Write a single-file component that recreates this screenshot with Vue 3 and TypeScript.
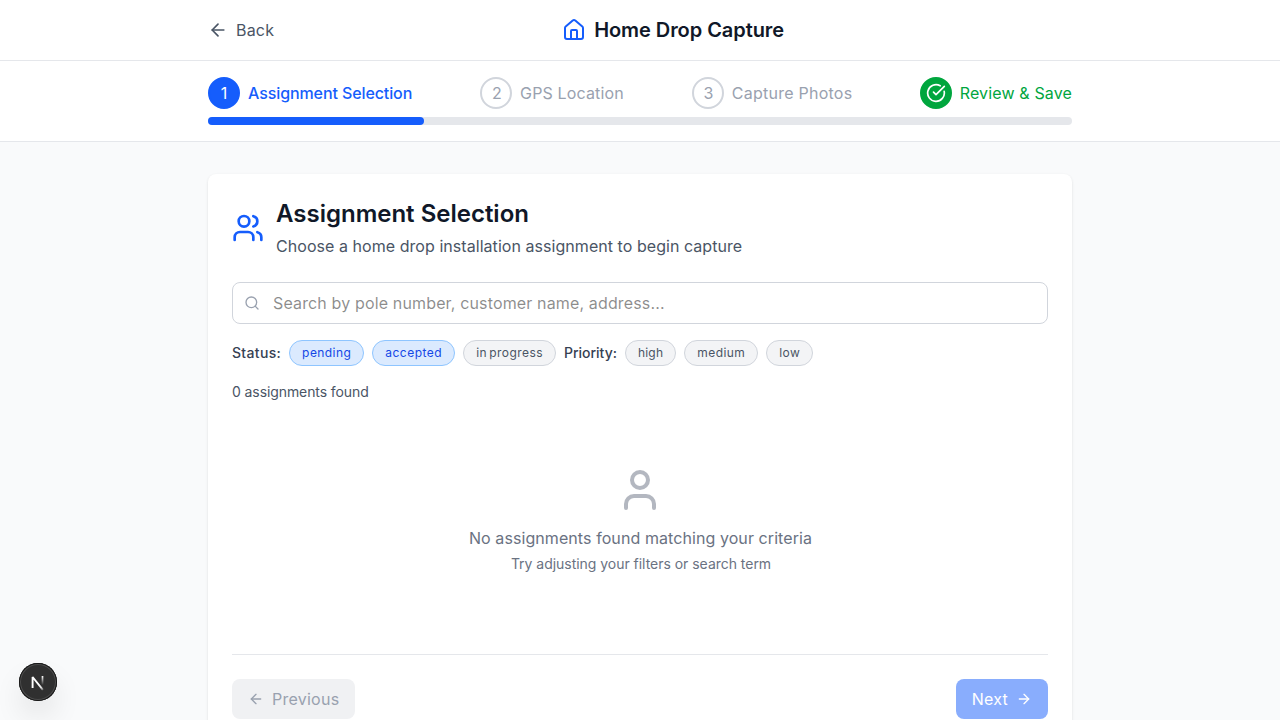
<script setup lang="ts">
import { computed, ref } from 'vue'

type StepState = 'active' | 'upcoming' | 'done'

interface Step {
  id: number
  label: string
  state: StepState
}

interface Chip {
  label: string
  selected: boolean
}

const steps: Step[] = [
  { id: 1, label: 'Assignment Selection', state: 'active' },
  { id: 2, label: 'GPS Location', state: 'upcoming' },
  { id: 3, label: 'Capture Photos', state: 'upcoming' },
  { id: 4, label: 'Review & Save', state: 'done' },
]

const progress = computed(() => (1 / steps.length) * 100)

const search = ref('')
const statuses = ref<Chip[]>([
  { label: 'pending', selected: true },
  { label: 'accepted', selected: true },
  { label: 'in progress', selected: false },
])
const priorities = ref<Chip[]>([
  { label: 'high', selected: false },
  { label: 'medium', selected: false },
  { label: 'low', selected: false },
])

const slug = (label: string) => 'chip-' + label.replace(' ', '-')
</script>

<template>
  <div class="page">
    <header class="header">
      <div class="container header-row">
        <button class="back" type="button">
          <svg class="icon i20" viewBox="0 0 24 24"><path d="m12 19-7-7 7-7" /><path d="M19 12H5" /></svg>
          <span>Back</span>
        </button>
        <div class="brand">
          <svg class="icon i24" viewBox="0 0 24 24">
            <path d="M15 21v-8a1 1 0 0 0-1-1h-4a1 1 0 0 0-1 1v8" />
            <path d="M3 10a2 2 0 0 1 .709-1.528l7-5.999a2 2 0 0 1 2.582 0l7 5.999A2 2 0 0 1 21 10v9a2 2 0 0 1-2 2H5a2 2 0 0 1-2-2z" />
          </svg>
          <h1>Home Drop Capture</h1>
        </div>
        <div></div>
      </div>
    </header>

    <nav class="progress">
      <div class="container">
        <div class="steps">
          <div v-for="step in steps" :key="step.id" class="step" :class="[step.state, 'step-' + step.id]">
            <div class="circle">
              <svg v-if="step.state === 'done'" class="icon i20" viewBox="0 0 24 24">
                <path d="M21.801 10A10 10 0 1 1 17 3.335" /><path d="m9 11 3 3L22 4" />
              </svg>
              <span v-else class="number">{{ step.id }}</span>
            </div>
            <span class="step-label">{{ step.label }}</span>
          </div>
        </div>
        <div class="track"><div class="fill" :style="{ width: progress + '%' }"></div></div>
      </div>
    </nav>

    <main class="container main">
      <section class="card">
        <div class="card-head">
          <svg class="icon i32" viewBox="0 0 24 24">
            <path d="M16 21v-2a4 4 0 0 0-4-4H6a4 4 0 0 0-4 4v2" />
            <circle cx="9" cy="7" r="4" />
            <path d="M22 21v-2a4 4 0 0 0-3-3.87" />
            <path d="M16 3.13a4 4 0 0 1 0 7.75" />
          </svg>
          <div>
            <h2>Assignment Selection</h2>
            <p>Choose a home drop installation assignment to begin capture</p>
          </div>
        </div>

        <label class="search">
          <svg class="icon i16" viewBox="0 0 24 24"><circle cx="11" cy="11" r="8" /><path d="m21 21-4.3-4.3" /></svg>
          <input v-model="search" type="text" placeholder="Search by pole number, customer name, address..." />
        </label>

        <div class="filters">
          <span class="filter-label status-label">Status:</span>
          <button
            v-for="chip in statuses"
            :key="chip.label"
            type="button"
            class="chip"
            :class="[slug(chip.label), { selected: chip.selected }]"
            @click="chip.selected = !chip.selected"
          >{{ chip.label }}</button>
          <span class="filter-label priority-label">Priority:</span>
          <button
            v-for="chip in priorities"
            :key="chip.label"
            type="button"
            class="chip"
            :class="[slug(chip.label), { selected: chip.selected }]"
            @click="chip.selected = !chip.selected"
          >{{ chip.label }}</button>
        </div>

        <p class="count">0 assignments found</p>

        <div class="empty">
          <svg class="icon i48" viewBox="0 0 24 24">
            <path d="M19 21v-2a4 4 0 0 0-4-4H9a4 4 0 0 0-4 4v2" /><circle cx="12" cy="7" r="4" />
          </svg>
          <p class="message">No assignments found matching your criteria</p>
          <p class="hint">Try adjusting your filters or search term</p>
        </div>

        <div class="actions">
          <button class="btn previous" type="button" disabled>
            <svg class="icon i16" viewBox="0 0 24 24"><path d="m12 19-7-7 7-7" /><path d="M19 12H5" /></svg>
            <span>Previous</span>
          </button>
          <button class="btn next" type="button" disabled>
            <span>Next</span>
            <svg class="icon i16" viewBox="0 0 24 24"><path d="M5 12h14" /><path d="m12 5 7 7-7 7" /></svg>
          </button>
        </div>
      </section>
    </main>

    <div class="dev-badge">
      <svg width="38" height="38" viewBox="0 0 38 38" fill="none">
        <defs>
          <linearGradient id="diag" x1="20" y1="21" x2="25" y2="27.5" gradientUnits="userSpaceOnUse">
            <stop stop-color="#fff" /><stop offset="0.5" stop-color="#fff" stop-opacity="0.85" /><stop offset="1" stop-color="#fff" stop-opacity="0.1" />
          </linearGradient>
          <linearGradient id="stem" x1="23" y1="13" x2="23" y2="22" gradientUnits="userSpaceOnUse">
            <stop stop-color="#fff" /><stop offset="1" stop-color="#fff" stop-opacity="0" />
          </linearGradient>
        </defs>
        <path d="M13.6 25V14L23.9 26.8" stroke="url(#diag)" stroke-width="1.9" stroke-linejoin="bevel" />
        <path d="M23.5 13v9" stroke="url(#stem)" stroke-width="1.7" />
      </svg>
    </div>
  </div>
</template>

<style>
body {
  margin: 0;
  background: #f9fafb;
}
</style>

<style scoped>
.page {
  height: 100vh;
  overflow: hidden;
  background: #f9fafb;
  color: #171717;
  font-family: Inter, "Liberation Sans", sans-serif;
  font-size: 16px;
  line-height: 24px;
}
.page *, .page { box-sizing: border-box; }
h1, h2, p { margin: 0; }
button, input { font: inherit; color: inherit; letter-spacing: inherit; }
button { padding: 0; border: 0; background: none; }
.container {
  width: 100%;
  max-width: 896px;
  margin: 0 auto;
  padding: 0 16px;
}
.icon {
  display: block;
  flex: none;
  fill: none;
  stroke: currentColor;
  stroke-width: 2;
  stroke-linecap: round;
  stroke-linejoin: round;
}
.i16 { width: 16px; height: 16px; }
.i20 { width: 20px; height: 20px; }
.i24 { width: 24px; height: 24px; }
.i32 { width: 32px; height: 32px; }
.i48 { width: 48px; height: 48px; }

.header {
  padding: 16px 0;
  background: #fff;
  border-bottom: 1px solid #e5e7eb;
}
.header-row {
  display: flex;
  align-items: center;
  justify-content: space-between;
}
.back {
  display: flex;
  align-items: center;
  gap: 8px;
  color: #4a5565;
  letter-spacing: 0.2px;
}
.brand {
  display: flex;
  align-items: center;
  gap: 8px;
}
.brand .icon { color: #155dfc; }
h1 {
  font-size: 20px;
  line-height: 28px;
  font-weight: 600;
  color: #101828;
  letter-spacing: -0.06px;
}

.progress {
  padding: 16px 0;
  background: #fff;
  border-bottom: 1px solid #e5e7eb;
}
.steps {
  display: flex;
  align-items: center;
  justify-content: space-between;
  margin-bottom: 8px;
}
.step {
  display: flex;
  align-items: center;
  gap: 8px;
  color: #99a1af;
}
.circle {
  display: flex;
  align-items: center;
  justify-content: center;
  width: 32px;
  height: 32px;
  border: 2px solid #d1d5dc;
  border-radius: 50%;
}
.upcoming .number { padding-left: 1.5px; }
.active { color: #155dfc; }
.active .step-label { font-weight: 500; }
.active .circle { background: #155dfc; border-color: #155dfc; color: #fff; }
.done { color: #00a63e; }
.done .circle { background: #00a63e; border-color: #00a63e; color: #fff; }
.step-1 .step-label { letter-spacing: -0.1px; }
.step-2 .step-label { letter-spacing: 0.15px; }
.step-3 .step-label { margin-right: -0.5px; letter-spacing: 0.25px; }
.step-4 .step-label { letter-spacing: 0.14px; }
.track {
  height: 8px;
  border-radius: 4px;
  background: #e5e7eb;
}
.fill {
  height: 8px;
  border-radius: 4px;
  background: #155dfc;
}

.main { padding-top: 32px; padding-bottom: 32px; }
.card {
  padding: 24px;
  border-radius: 8px;
  background: #fff;
  box-shadow: 0 1px 3px rgba(0, 0, 0, 0.1), 0 1px 2px -1px rgba(0, 0, 0, 0.1);
}
.card-head {
  display: flex;
  align-items: center;
  gap: 12px;
  margin-bottom: 24px;
  color: #4a5565;
}
.card-head .icon { color: #155dfc; }
.card-head p { letter-spacing: 0.05px; }
h2 {
  margin-bottom: 4px;
  font-size: 24px;
  line-height: 32px;
  font-weight: 600;
  color: #101828;
}
.search {
  display: flex;
  align-items: center;
  gap: 13px;
  height: 42px;
  margin-bottom: 16px;
  padding: 0 11px;
  border: 1px solid #d1d5dc;
  border-radius: 8px;
}
.search .icon { color: #99a1af; }
.search input {
  flex: 1;
  min-width: 0;
  height: 24px;
  padding: 0;
  border: 0;
  outline: 0;
  background: transparent;
  letter-spacing: 0.145px;
}
.search input::placeholder { color: rgba(23, 23, 23, 0.5); opacity: 1; }
.filters {
  display: flex;
  align-items: center;
  gap: 8px;
  margin-bottom: 16px;
}
.filter-label {
  font-size: 14px;
  line-height: 20px;
  font-weight: 500;
  color: #364153;
}
.status-label { letter-spacing: 0.33px; }
.priority-label { letter-spacing: 0; }
.chip {
  padding: 4px 12px;
  border: 1px solid #d1d5dc;
  border-radius: 13px;
  background: #f3f4f6;
  font-size: 12px;
  line-height: 16px;
  color: #4a5565;
}
.chip.selected {
  border-color: #8ec5ff;
  background: #dbeafe;
  color: #1447e6;
}
.chip-pending { letter-spacing: 0.43px; }
.chip-accepted { letter-spacing: 0.5px; }
.chip-in-progress { letter-spacing: 0.42px; word-spacing: -1.5px; }
.chip-high { letter-spacing: 0.2px; }
.chip-medium { letter-spacing: 0.45px; }
.chip-low { letter-spacing: 0.4px; }
.count {
  margin-bottom: 16px;
  font-size: 14px;
  line-height: 20px;
  color: #4a5565;
  letter-spacing: -0.09px;
}
.empty {
  display: flex;
  flex-direction: column;
  align-items: center;
  padding: 48px 0;
  color: #6a7282;
}
.empty .icon { margin-bottom: 12px; opacity: 0.5; }
.message { padding-left: 1px; letter-spacing: 0.08px; }
.hint {
  margin-top: 4px;
  padding-left: 2px;
  font-size: 14px;
  line-height: 20px;
  letter-spacing: -0.03px;
}
.actions {
  display: flex;
  justify-content: space-between;
  margin-top: 32px;
  padding-top: 24px;
  border-top: 1px solid #e5e7eb;
}
.btn {
  display: flex;
  align-items: center;
  gap: 8px;
  padding: 8px 16px;
  border-radius: 8px;
  letter-spacing: 0.25px;
}
.previous { background: #f0f1f3; color: #99a1af; }
.next { background: #155dfc; color: #fff; opacity: 0.5; }

.dev-badge {
  position: fixed;
  left: 19px;
  bottom: 19px;
  width: 38px;
  height: 38px;
  border-radius: 50%;
  background: #303030;
  box-shadow: inset 0 0 0 1px #171717, inset 0 0 0 2px #4d4d4d, 0 16px 32px -8px rgba(0, 0, 0, 0.24);
}
.dev-badge svg { display: block; }
</style>
